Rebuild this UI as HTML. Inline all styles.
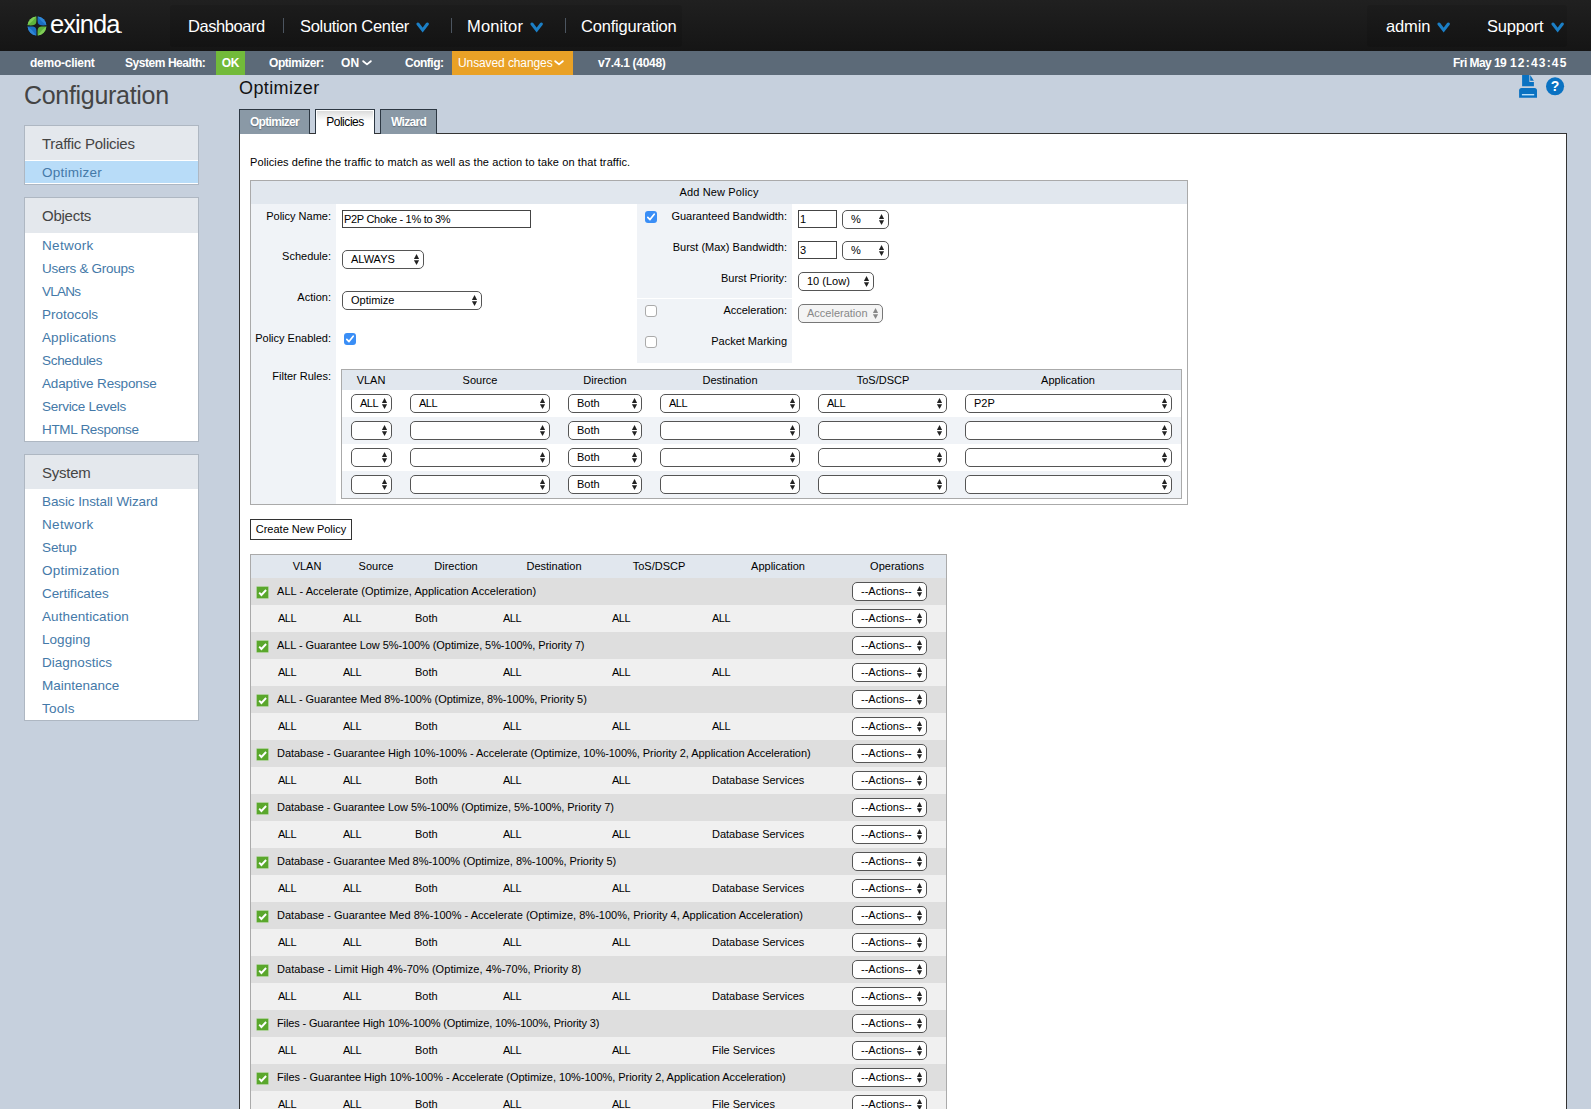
<!DOCTYPE html>
<html>
<head>
<meta charset="utf-8">
<title>Exinda - Optimizer Policies</title>
<style>
*{box-sizing:border-box;margin:0;padding:0}
html,body{width:1591px;height:1109px;overflow:hidden}
body{font-family:"Liberation Sans",sans-serif;background:#c6d0dd;position:relative;font-size:11px;color:#000}
.abs{position:absolute}
/* navbar */
#nav{position:absolute;left:0;top:0;width:1591px;height:51px;background:linear-gradient(#202020,#151515)}
#nav .box{position:absolute;top:5px;height:42px;background:linear-gradient(#1c1c1c,#131313);border-radius:3px}
#nav .it{position:absolute;top:16px;color:#fff;font-size:16.5px;line-height:20px;white-space:nowrap}
#nav .sep{position:absolute;top:18px;width:1px;height:15px;background:#4c5560}
.chev{position:absolute}
/* status */
#status{position:absolute;left:0;top:51px;width:1591px;height:24px;background:#5c6a78;color:#fff;font-size:12px;font-weight:bold}
#status span{position:absolute;top:0;line-height:25px;white-space:nowrap}
/* sidebar */
#cfg{position:absolute;left:24px;top:80px;font-size:25px;line-height:30px;color:#444;letter-spacing:-0.3px}
.sb{position:absolute;left:24px;width:175px;background:#fff;border:1px solid #aeb7c2}
.sb h3{font-weight:normal;font-size:15px;color:#444;height:34px;line-height:35px;padding-left:17px;background:#e4e8ed;letter-spacing:-0.25px}
.sb a{display:block;height:23px;line-height:24px;padding-left:17px;color:#4479a8;font-size:13.5px;white-space:nowrap}
.sb a{position:relative;top:1px}
.sb a.sel{top:0;background:#b8dcf8;height:22px;line-height:24px;border-top:1px solid #fff;box-sizing:content-box}
/* main */
#ttl{position:absolute;left:239px;top:75px;font-size:18px;line-height:26px;color:#111;letter-spacing:0.4px}
.tab{position:absolute;z-index:2;top:109px;height:25px;border:1px solid #2d3843;border-bottom:none;background:#8a99a6;color:#fff;font-size:12px;font-weight:bold;text-align:center;line-height:25px;letter-spacing:-0.7px;text-shadow:0 1px 1px rgba(60,70,80,.5)}
.tab.act{background:linear-gradient(#d8d8d8,#fff 45%);box-shadow:inset 1px 1px 0 #fff,inset -1px 0 0 #fff;color:#000;font-weight:normal;height:25px;letter-spacing:-0.45px;text-shadow:none}
#panel{position:absolute;left:239px;top:133px;width:1328px;height:990px;background:#fff;border:1px solid #333}
.lbl{position:absolute;text-align:right;white-space:nowrap;font-size:11px;line-height:14px}
.inp{position:absolute;border:1px solid #444;background:#fff;height:18px;font-size:11px;line-height:16px;padding-left:1px;white-space:nowrap;overflow:hidden}
.s{position:absolute;height:19px;border:1px solid #555;border-radius:5px;background:#fff;font-size:11px;line-height:17px;padding-left:8px;white-space:nowrap;overflow:hidden}
.s:before,.s:after{content:"";position:absolute;right:3.9px;width:5.2px;background:#222}
.s:before{top:3.1px;height:4.9px;clip-path:polygon(50% 0,100% 100%,0 100%)}
.s:after{top:9.3px;height:4.7px;clip-path:polygon(0 0,100% 0,50% 100%)}
.s.dis{color:#888;border-color:#777;background:#f4f4f4}
.s.dis:before,.s.dis:after{background:#888}
.cb{position:absolute;width:12px;height:12px;border-radius:3px}
.cb.on{background:#3a8ef6}
.cb.off{background:#fff;border:1px solid #aaa}
.th{position:absolute;text-align:center;white-space:nowrap;font-size:11px;line-height:14px}
.t{position:absolute;white-space:nowrap;font-size:11px;line-height:14px}
.gc{position:absolute;width:11px;height:11px;background:#5aa72c;box-shadow:0 0 0 0.5px #7cc255}
</style>
</head>
<body>
<div id="nav">
<div class="box" style="left:170px;width:512px"></div>
<div class="box" style="left:1367px;width:200px"></div>
<svg class="abs" style="left:27.4px;top:16.4px" width="20.2" height="20.2" viewBox="0 0 21 21">
<g><path d="M9.75 0.62 A9.8 9.8 0 0 0 0.62 9.75 C9.5 10.1 10.1 9.5 9.75 0.62 Z" fill="#5cb23c"/><path d="M9.75 0.62 A9.8 9.8 0 0 0 0.62 9.75 Q6 6 9.75 0.62 Z" fill="#7fcc57"/></g>
<g transform="rotate(90 10.4 10.4)"><path d="M9.75 0.62 A9.8 9.8 0 0 0 0.62 9.75 C9.5 10.1 10.1 9.5 9.75 0.62 Z" fill="#1a6ec2"/><path d="M9.75 0.62 A9.8 9.8 0 0 0 0.62 9.75 Q6 6 9.75 0.62 Z" fill="#2f86d6"/></g>
<g transform="rotate(180 10.4 10.4)"><path d="M9.75 0.62 A9.8 9.8 0 0 0 0.62 9.75 C9.5 10.1 10.1 9.5 9.75 0.62 Z" fill="#5cb23c"/><path d="M9.75 0.62 A9.8 9.8 0 0 0 0.62 9.75 Q6 6 9.75 0.62 Z" fill="#7fcc57"/></g>
<g transform="rotate(270 10.4 10.4)"><path d="M9.75 0.62 A9.8 9.8 0 0 0 0.62 9.75 C9.5 10.1 10.1 9.5 9.75 0.62 Z" fill="#1a6ec2"/><path d="M9.75 0.62 A9.8 9.8 0 0 0 0.62 9.75 Q6 6 9.75 0.62 Z" fill="#2f86d6"/></g>
</svg>
<div class="abs" id="logo" style="left:50px;top:8px;color:#fff;font-size:25.5px;line-height:32px;letter-spacing:-0.95px">exinda<span style="font-size:12px">.</span></div>
<div class="it" style="left:188px;letter-spacing:-0.45px">Dashboard</div>
<div class="sep" style="left:283px"></div>
<div class="it" style="left:300px;letter-spacing:-0.32px">Solution Center</div><svg class="chev" style="left:415px;top:22px" width="14" height="11" viewBox="0 0 14 11"><path d="M3 2 L7.65 8.1 L12.3 2" fill="none" stroke="#1b7fc6" stroke-width="3" stroke-linecap="round" stroke-linejoin="miter"/></svg>
<div class="sep" style="left:451px"></div>
<div class="it" style="left:467px;letter-spacing:0.15px">Monitor</div><svg class="chev" style="left:529px;top:22px" width="14" height="11" viewBox="0 0 14 11"><path d="M3 2 L7.65 8.1 L12.3 2" fill="none" stroke="#1b7fc6" stroke-width="3" stroke-linecap="round" stroke-linejoin="miter"/></svg>
<div class="sep" style="left:565px"></div>
<div class="it" style="left:581px;letter-spacing:-0.2px">Configuration</div>
<div class="it" style="left:1386px;letter-spacing:-0.15px">admin</div><svg class="chev" style="left:1436px;top:22px" width="14" height="11" viewBox="0 0 14 11"><path d="M3 2 L7.65 8.1 L12.3 2" fill="none" stroke="#1b7fc6" stroke-width="3" stroke-linecap="round" stroke-linejoin="miter"/></svg>
<div class="it" style="left:1487px;letter-spacing:-0.2px">Support</div><svg class="chev" style="left:1550px;top:22px" width="14" height="11" viewBox="0 0 14 11"><path d="M3 2 L7.65 8.1 L12.3 2" fill="none" stroke="#1b7fc6" stroke-width="3" stroke-linecap="round" stroke-linejoin="miter"/></svg>
</div>
<div id="status">
<span style="left:30px;letter-spacing:-0.25px">demo-client</span>
<span style="left:125px;letter-spacing:-0.45px">System Health:</span>
<span style="left:216px;width:29px;height:24px;background:#72ba3a;text-align:center;letter-spacing:-0.3px">OK</span>
<span style="left:269px;letter-spacing:-0.45px">Optimizer:</span>
<span style="left:341px;letter-spacing:0.2px">ON</span><svg class="chev" style="left:362px;top:9px" width="10" height="6" viewBox="0 0 10 6"><path d="M1.2 1.2 L5.0 4.4 L8.8 1.2" fill="none" stroke="#fff" stroke-width="1.8" stroke-linecap="round" stroke-linejoin="round"/></svg>
<span style="left:405px;letter-spacing:-0.5px">Config:</span>
<span style="left:452px;width:121px;height:24px;background:#e9a126;padding-left:6px;font-weight:normal;letter-spacing:-0.1px">Unsaved changes</span><svg class="chev" style="left:554px;top:9px" width="10" height="6" viewBox="0 0 10 6"><path d="M1.2 1.2 L5.0 4.4 L8.8 1.2" fill="none" stroke="#fff" stroke-width="1.8" stroke-linecap="round" stroke-linejoin="round"/></svg>
<span style="left:598px;letter-spacing:-0.3px">v7.4.1 (4048)</span>
<span style="left:1453px;letter-spacing:-0.55px">Fri May 19 <span style="position:static;letter-spacing:1.2px;margin-left:1px">12:43:45</span></span>
</div>
<div id="cfg">Configuration</div>
<div id="side">
<div class="sb" style="top:125px;height:60px"><h3>Traffic Policies</h3><a class="sel" style="letter-spacing:0.24px">Optimizer</a></div>
<div class="sb" style="top:197px;height:245px"><h3 style="height:35px">Objects</h3>
<a style="letter-spacing:0.31px">Network</a><a style="letter-spacing:-0.27px">Users &amp; Groups</a><a style="letter-spacing:-0.76px">VLANs</a><a style="letter-spacing:-0.02px">Protocols</a><a style="letter-spacing:0.11px">Applications</a><a style="letter-spacing:-0.31px">Schedules</a><a style="letter-spacing:-0.14px">Adaptive Response</a><a style="letter-spacing:-0.28px">Service Levels</a><a style="letter-spacing:-0.32px">HTML Response</a></div>
<div class="sb" style="top:454px;height:267px"><h3>System</h3>
<a style="letter-spacing:-0.1px">Basic Install Wizard</a><a style="letter-spacing:0.31px">Network</a><a style="letter-spacing:-0.12px">Setup</a><a style="letter-spacing:0.21px">Optimization</a><a style="letter-spacing:-0.08px">Certificates</a><a style="letter-spacing:0.09px">Authentication</a><a style="letter-spacing:0.04px">Logging</a><a style="letter-spacing:0.02px">Diagnostics</a><a style="letter-spacing:-0.0px">Maintenance</a><a style="letter-spacing:0.22px">Tools</a></div>
</div>
<div id="ttl">Optimizer</div>
<div id="tabs">
<div class="tab" style="left:239px;width:71px">Optimizer</div>
<div class="tab act" style="left:315px;width:60px;z-index:3">Policies</div>
<div class="tab" style="left:380px;width:57px">Wizard</div>
<svg class="abs" style="left:1519px;top:75px" width="18" height="24" viewBox="0 0 18 24">
<path d="M3.1 0 H10.4 V7 H14.9 V11.3 H3.1 Z" fill="#0a72c2"/><path d="M11.2 0 V5.8 H14.9 Z" fill="#0a72c2"/>
<path d="M0.1 22.7 V15.6 Q0.1 13.1 2.6 13.1 H15.5 Q18 13.1 18 15.6 V22.7 Z" fill="#0a72c2"/><rect x="2.9" y="19" width="12.3" height="1.4" fill="#b9e0fb"/>
</svg>
<svg class="abs" style="left:1545px;top:76px" width="20" height="20" viewBox="0 0 20 20"><circle cx="10.05" cy="10.3" r="9.05" fill="#0a72c2"/>
<text x="10.05" y="14.9" text-anchor="middle" font-family="Liberation Sans, sans-serif" font-weight="bold" font-size="14" fill="#fff">?</text></svg>
</div>
<div id="panel">
<div class="t" style="left:10px;top:21px;letter-spacing:0.1px">Policies define the traffic to match as well as the action to take on that traffic.</div>
<div class="abs" style="left:10px;top:46px;width:938px;height:325px;border:1px solid #aaa;background:#fff"></div>
<div class="abs" style="left:11px;top:47px;width:936px;height:23px;background:#e1e7ee"></div>
<div class="th" style="left:379px;top:51px;width:200px;letter-spacing:0.15px">Add New Policy</div>
<div class="abs" style="left:11px;top:70px;width:85px;height:300px;background:#f0f3f7"></div>
<div class="lbl" style="left:-59px;top:75px;width:150px">Policy Name:</div>
<div class="lbl" style="left:-59px;top:115px;width:150px">Schedule:</div>
<div class="lbl" style="left:-59px;top:156px;width:150px">Action:</div>
<div class="lbl" style="left:-59px;top:197px;width:150px">Policy Enabled:</div>
<div class="lbl" style="left:-59px;top:235px;width:150px">Filter Rules:</div>
<div class="inp" style="left:102px;top:76px;width:189px"><span style="letter-spacing:-0.3px">P2P Choke - 1% to 3%</span></div>
<div class="s " style="left:102px;top:116px;width:82px">ALWAYS</div>
<div class="s " style="left:102px;top:157px;width:140px">Optimize</div>
<div class="cb on" style="left:104px;top:199px"><svg width="12" height="12" viewBox="0 0 12 12" style="display:block"><path d="M2.8 6.3 L5 8.6 L9.2 3.2" fill="none" stroke="#fff" stroke-width="1.7" stroke-linecap="round" stroke-linejoin="round"/></svg></div>
<div class="abs" style="left:397px;top:70px;width:155px;height:94px;background:#f0f3f7"></div>
<div class="abs" style="left:397px;top:165px;width:155px;height:64px;background:#f0f3f7"></div>
<div class="cb on" style="left:405px;top:77px"><svg width="12" height="12" viewBox="0 0 12 12" style="display:block"><path d="M2.8 6.3 L5 8.6 L9.2 3.2" fill="none" stroke="#fff" stroke-width="1.7" stroke-linecap="round" stroke-linejoin="round"/></svg></div>
<div class="lbl" style="left:397px;top:75px;width:150px">Guaranteed Bandwidth:</div>
<div class="inp" style="left:558px;top:76px;width:39px">1</div>
<div class="s " style="left:602px;top:76px;width:47px">%</div>
<div class="lbl" style="left:397px;top:106px;width:150px">Burst (Max) Bandwidth:</div>
<div class="inp" style="left:558px;top:107px;width:39px">3</div>
<div class="s " style="left:602px;top:107px;width:47px">%</div>
<div class="lbl" style="left:397px;top:137px;width:150px">Burst Priority:</div>
<div class="s " style="left:558px;top:138px;width:76px">10 (Low)</div>
<div class="cb off" style="left:405px;top:171px"></div>
<div class="lbl" style="left:397px;top:169px;width:150px">Acceleration:</div>
<div class="s dis" style="left:558px;top:170px;width:85px">Acceleration</div>
<div class="cb off" style="left:405px;top:202px"></div>
<div class="lbl" style="left:397px;top:200px;width:150px">Packet Marking</div>
<div class="abs" style="left:101px;top:235px;width:841px;height:130px;border:1px solid #aaa;background:#fff"></div>
<div class="abs" style="left:102px;top:236px;width:839px;height:20px;background:#e1e7ee"></div>
<div class="th" style="left:71.0px;top:239px;width:120px">VLAN</div>
<div class="th" style="left:180.0px;top:239px;width:120px">Source</div>
<div class="th" style="left:305.0px;top:239px;width:120px">Direction</div>
<div class="th" style="left:430.0px;top:239px;width:120px">Destination</div>
<div class="th" style="left:583.0px;top:239px;width:120px">ToS/DSCP</div>
<div class="th" style="left:768.0px;top:239px;width:120px">Application</div>
<div class="s " style="left:111px;top:260px;width:41px;letter-spacing:-0.5px">ALL</div>
<div class="s " style="left:170px;top:260px;width:140px;letter-spacing:-0.5px">ALL</div>
<div class="s " style="left:328px;top:260px;width:74px">Both</div>
<div class="s " style="left:420px;top:260px;width:140px;letter-spacing:-0.5px">ALL</div>
<div class="s " style="left:578px;top:260px;width:129px;letter-spacing:-0.5px">ALL</div>
<div class="s " style="left:725px;top:260px;width:207px">P2P</div>
<div class="abs" style="left:102px;top:283px;width:839px;height:27px;background:#f0f3f7"></div>
<div class="s " style="left:111px;top:287px;width:41px"></div>
<div class="s " style="left:170px;top:287px;width:140px"></div>
<div class="s " style="left:328px;top:287px;width:74px">Both</div>
<div class="s " style="left:420px;top:287px;width:140px"></div>
<div class="s " style="left:578px;top:287px;width:129px"></div>
<div class="s " style="left:725px;top:287px;width:207px"></div>
<div class="s " style="left:111px;top:314px;width:41px"></div>
<div class="s " style="left:170px;top:314px;width:140px"></div>
<div class="s " style="left:328px;top:314px;width:74px">Both</div>
<div class="s " style="left:420px;top:314px;width:140px"></div>
<div class="s " style="left:578px;top:314px;width:129px"></div>
<div class="s " style="left:725px;top:314px;width:207px"></div>
<div class="abs" style="left:102px;top:337px;width:839px;height:27px;background:#f0f3f7"></div>
<div class="s " style="left:111px;top:341px;width:41px"></div>
<div class="s " style="left:170px;top:341px;width:140px"></div>
<div class="s " style="left:328px;top:341px;width:74px">Both</div>
<div class="s " style="left:420px;top:341px;width:140px"></div>
<div class="s " style="left:578px;top:341px;width:129px"></div>
<div class="s " style="left:725px;top:341px;width:207px"></div>
<div class="abs" style="left:10px;top:385px;width:102px;height:21px;border:1px solid #333;background:#fff;font-size:11px;line-height:19px;text-align:center;white-space:nowrap">Create New Policy</div>
<div class="abs" style="left:10px;top:420px;width:697px;height:600px;border:1px solid #aaa;background:#fff"></div>
<div class="abs" style="left:11px;top:421px;width:695px;height:23px;background:#e1e7ee"></div>
<div class="th" style="left:7.0px;top:425px;width:120px">VLAN</div>
<div class="th" style="left:76.0px;top:425px;width:120px">Source</div>
<div class="th" style="left:156.0px;top:425px;width:120px">Direction</div>
<div class="th" style="left:254.0px;top:425px;width:120px">Destination</div>
<div class="th" style="left:359.0px;top:425px;width:120px">ToS/DSCP</div>
<div class="th" style="left:478.0px;top:425px;width:120px">Application</div>
<div class="th" style="left:597.0px;top:425px;width:120px">Operations</div>
<div class="abs" style="left:11px;top:444px;width:695px;height:27px;background:#dedede"></div>
<div class="gc" style="left:17px;top:453px"><svg width="11" height="11" viewBox="0 0 11 11" style="display:block"><path d="M2.2 5.7 L4.4 8 L9.1 3" fill="none" stroke="#fff" stroke-width="1.9" stroke-linejoin="miter"/></svg></div>
<div class="t" style="left:37px;top:450px"><span class="pn" style="letter-spacing:0.052px">ALL - Accelerate (Optimize, Application Acceleration)</span></div>
<div class="s " style="left:612px;top:448px;width:75px">--Actions--</div>
<div class="abs" style="left:11px;top:471px;width:695px;height:27px;background:#f0f0f0"></div>
<div class="t" style="left:38px;top:477px;letter-spacing:-0.5px">ALL</div>
<div class="t" style="left:103px;top:477px;letter-spacing:-0.5px">ALL</div>
<div class="t" style="left:175px;top:477px">Both</div>
<div class="t" style="left:263px;top:477px;letter-spacing:-0.5px">ALL</div>
<div class="t" style="left:372px;top:477px;letter-spacing:-0.5px">ALL</div>
<div class="t" style="left:472px;top:477px;letter-spacing:-0.5px">ALL</div>
<div class="s " style="left:612px;top:475px;width:75px">--Actions--</div>
<div class="abs" style="left:11px;top:498px;width:695px;height:27px;background:#dedede"></div>
<div class="gc" style="left:17px;top:507px"><svg width="11" height="11" viewBox="0 0 11 11" style="display:block"><path d="M2.2 5.7 L4.4 8 L9.1 3" fill="none" stroke="#fff" stroke-width="1.9" stroke-linejoin="miter"/></svg></div>
<div class="t" style="left:37px;top:504px"><span class="pn" style="letter-spacing:-0.078px">ALL - Guarantee Low 5%-100% (Optimize, 5%-100%, Priority 7)</span></div>
<div class="s " style="left:612px;top:502px;width:75px">--Actions--</div>
<div class="abs" style="left:11px;top:525px;width:695px;height:27px;background:#f0f0f0"></div>
<div class="t" style="left:38px;top:531px;letter-spacing:-0.5px">ALL</div>
<div class="t" style="left:103px;top:531px;letter-spacing:-0.5px">ALL</div>
<div class="t" style="left:175px;top:531px">Both</div>
<div class="t" style="left:263px;top:531px;letter-spacing:-0.5px">ALL</div>
<div class="t" style="left:372px;top:531px;letter-spacing:-0.5px">ALL</div>
<div class="t" style="left:472px;top:531px;letter-spacing:-0.5px">ALL</div>
<div class="s " style="left:612px;top:529px;width:75px">--Actions--</div>
<div class="abs" style="left:11px;top:552px;width:695px;height:27px;background:#dedede"></div>
<div class="gc" style="left:17px;top:561px"><svg width="11" height="11" viewBox="0 0 11 11" style="display:block"><path d="M2.2 5.7 L4.4 8 L9.1 3" fill="none" stroke="#fff" stroke-width="1.9" stroke-linejoin="miter"/></svg></div>
<div class="t" style="left:37px;top:558px"><span class="pn" style="letter-spacing:-0.059px">ALL - Guarantee Med 8%-100% (Optimize, 8%-100%, Priority 5)</span></div>
<div class="s " style="left:612px;top:556px;width:75px">--Actions--</div>
<div class="abs" style="left:11px;top:579px;width:695px;height:27px;background:#f0f0f0"></div>
<div class="t" style="left:38px;top:585px;letter-spacing:-0.5px">ALL</div>
<div class="t" style="left:103px;top:585px;letter-spacing:-0.5px">ALL</div>
<div class="t" style="left:175px;top:585px">Both</div>
<div class="t" style="left:263px;top:585px;letter-spacing:-0.5px">ALL</div>
<div class="t" style="left:372px;top:585px;letter-spacing:-0.5px">ALL</div>
<div class="t" style="left:472px;top:585px;letter-spacing:-0.5px">ALL</div>
<div class="s " style="left:612px;top:583px;width:75px">--Actions--</div>
<div class="abs" style="left:11px;top:606px;width:695px;height:27px;background:#dedede"></div>
<div class="gc" style="left:17px;top:615px"><svg width="11" height="11" viewBox="0 0 11 11" style="display:block"><path d="M2.2 5.7 L4.4 8 L9.1 3" fill="none" stroke="#fff" stroke-width="1.9" stroke-linejoin="miter"/></svg></div>
<div class="t" style="left:37px;top:612px"><span class="pn" style="letter-spacing:-0.042px">Database - Guarantee High 10%-100% - Accelerate (Optimize, 10%-100%, Priority 2, Application Acceleration)</span></div>
<div class="s " style="left:612px;top:610px;width:75px">--Actions--</div>
<div class="abs" style="left:11px;top:633px;width:695px;height:27px;background:#f0f0f0"></div>
<div class="t" style="left:38px;top:639px;letter-spacing:-0.5px">ALL</div>
<div class="t" style="left:103px;top:639px;letter-spacing:-0.5px">ALL</div>
<div class="t" style="left:175px;top:639px">Both</div>
<div class="t" style="left:263px;top:639px;letter-spacing:-0.5px">ALL</div>
<div class="t" style="left:372px;top:639px;letter-spacing:-0.5px">ALL</div>
<div class="t" style="left:472px;top:639px">Database Services</div>
<div class="s " style="left:612px;top:637px;width:75px">--Actions--</div>
<div class="abs" style="left:11px;top:660px;width:695px;height:27px;background:#dedede"></div>
<div class="gc" style="left:17px;top:669px"><svg width="11" height="11" viewBox="0 0 11 11" style="display:block"><path d="M2.2 5.7 L4.4 8 L9.1 3" fill="none" stroke="#fff" stroke-width="1.9" stroke-linejoin="miter"/></svg></div>
<div class="t" style="left:37px;top:666px"><span class="pn" style="letter-spacing:-0.048px">Database - Guarantee Low 5%-100% (Optimize, 5%-100%, Priority 7)</span></div>
<div class="s " style="left:612px;top:664px;width:75px">--Actions--</div>
<div class="abs" style="left:11px;top:687px;width:695px;height:27px;background:#f0f0f0"></div>
<div class="t" style="left:38px;top:693px;letter-spacing:-0.5px">ALL</div>
<div class="t" style="left:103px;top:693px;letter-spacing:-0.5px">ALL</div>
<div class="t" style="left:175px;top:693px">Both</div>
<div class="t" style="left:263px;top:693px;letter-spacing:-0.5px">ALL</div>
<div class="t" style="left:372px;top:693px;letter-spacing:-0.5px">ALL</div>
<div class="t" style="left:472px;top:693px">Database Services</div>
<div class="s " style="left:612px;top:691px;width:75px">--Actions--</div>
<div class="abs" style="left:11px;top:714px;width:695px;height:27px;background:#dedede"></div>
<div class="gc" style="left:17px;top:723px"><svg width="11" height="11" viewBox="0 0 11 11" style="display:block"><path d="M2.2 5.7 L4.4 8 L9.1 3" fill="none" stroke="#fff" stroke-width="1.9" stroke-linejoin="miter"/></svg></div>
<div class="t" style="left:37px;top:720px"><span class="pn" style="letter-spacing:-0.031px">Database - Guarantee Med 8%-100% (Optimize, 8%-100%, Priority 5)</span></div>
<div class="s " style="left:612px;top:718px;width:75px">--Actions--</div>
<div class="abs" style="left:11px;top:741px;width:695px;height:27px;background:#f0f0f0"></div>
<div class="t" style="left:38px;top:747px;letter-spacing:-0.5px">ALL</div>
<div class="t" style="left:103px;top:747px;letter-spacing:-0.5px">ALL</div>
<div class="t" style="left:175px;top:747px">Both</div>
<div class="t" style="left:263px;top:747px;letter-spacing:-0.5px">ALL</div>
<div class="t" style="left:372px;top:747px;letter-spacing:-0.5px">ALL</div>
<div class="t" style="left:472px;top:747px">Database Services</div>
<div class="s " style="left:612px;top:745px;width:75px">--Actions--</div>
<div class="abs" style="left:11px;top:768px;width:695px;height:27px;background:#dedede"></div>
<div class="gc" style="left:17px;top:777px"><svg width="11" height="11" viewBox="0 0 11 11" style="display:block"><path d="M2.2 5.7 L4.4 8 L9.1 3" fill="none" stroke="#fff" stroke-width="1.9" stroke-linejoin="miter"/></svg></div>
<div class="t" style="left:37px;top:774px"><span class="pn" style="letter-spacing:0.014px">Database - Guarantee Med 8%-100% - Accelerate (Optimize, 8%-100%, Priority 4, Application Acceleration)</span></div>
<div class="s " style="left:612px;top:772px;width:75px">--Actions--</div>
<div class="abs" style="left:11px;top:795px;width:695px;height:27px;background:#f0f0f0"></div>
<div class="t" style="left:38px;top:801px;letter-spacing:-0.5px">ALL</div>
<div class="t" style="left:103px;top:801px;letter-spacing:-0.5px">ALL</div>
<div class="t" style="left:175px;top:801px">Both</div>
<div class="t" style="left:263px;top:801px;letter-spacing:-0.5px">ALL</div>
<div class="t" style="left:372px;top:801px;letter-spacing:-0.5px">ALL</div>
<div class="t" style="left:472px;top:801px">Database Services</div>
<div class="s " style="left:612px;top:799px;width:75px">--Actions--</div>
<div class="abs" style="left:11px;top:822px;width:695px;height:27px;background:#dedede"></div>
<div class="gc" style="left:17px;top:831px"><svg width="11" height="11" viewBox="0 0 11 11" style="display:block"><path d="M2.2 5.7 L4.4 8 L9.1 3" fill="none" stroke="#fff" stroke-width="1.9" stroke-linejoin="miter"/></svg></div>
<div class="t" style="left:37px;top:828px"><span class="pn" style="letter-spacing:0.05px">Database - Limit High 4%-70% (Optimize, 4%-70%, Priority 8)</span></div>
<div class="s " style="left:612px;top:826px;width:75px">--Actions--</div>
<div class="abs" style="left:11px;top:849px;width:695px;height:27px;background:#f0f0f0"></div>
<div class="t" style="left:38px;top:855px;letter-spacing:-0.5px">ALL</div>
<div class="t" style="left:103px;top:855px;letter-spacing:-0.5px">ALL</div>
<div class="t" style="left:175px;top:855px">Both</div>
<div class="t" style="left:263px;top:855px;letter-spacing:-0.5px">ALL</div>
<div class="t" style="left:372px;top:855px;letter-spacing:-0.5px">ALL</div>
<div class="t" style="left:472px;top:855px">Database Services</div>
<div class="s " style="left:612px;top:853px;width:75px">--Actions--</div>
<div class="abs" style="left:11px;top:876px;width:695px;height:27px;background:#dedede"></div>
<div class="gc" style="left:17px;top:885px"><svg width="11" height="11" viewBox="0 0 11 11" style="display:block"><path d="M2.2 5.7 L4.4 8 L9.1 3" fill="none" stroke="#fff" stroke-width="1.9" stroke-linejoin="miter"/></svg></div>
<div class="t" style="left:37px;top:882px"><span class="pn" style="letter-spacing:-0.133px">Files - Guarantee High 10%-100% (Optimize, 10%-100%, Priority 3)</span></div>
<div class="s " style="left:612px;top:880px;width:75px">--Actions--</div>
<div class="abs" style="left:11px;top:903px;width:695px;height:27px;background:#f0f0f0"></div>
<div class="t" style="left:38px;top:909px;letter-spacing:-0.5px">ALL</div>
<div class="t" style="left:103px;top:909px;letter-spacing:-0.5px">ALL</div>
<div class="t" style="left:175px;top:909px">Both</div>
<div class="t" style="left:263px;top:909px;letter-spacing:-0.5px">ALL</div>
<div class="t" style="left:372px;top:909px;letter-spacing:-0.5px">ALL</div>
<div class="t" style="left:472px;top:909px">File Services</div>
<div class="s " style="left:612px;top:907px;width:75px">--Actions--</div>
<div class="abs" style="left:11px;top:930px;width:695px;height:27px;background:#dedede"></div>
<div class="gc" style="left:17px;top:939px"><svg width="11" height="11" viewBox="0 0 11 11" style="display:block"><path d="M2.2 5.7 L4.4 8 L9.1 3" fill="none" stroke="#fff" stroke-width="1.9" stroke-linejoin="miter"/></svg></div>
<div class="t" style="left:37px;top:936px"><span class="pn" style="letter-spacing:-0.053px">Files - Guarantee High 10%-100% - Accelerate (Optimize, 10%-100%, Priority 2, Application Acceleration)</span></div>
<div class="s " style="left:612px;top:934px;width:75px">--Actions--</div>
<div class="abs" style="left:11px;top:957px;width:695px;height:27px;background:#f0f0f0"></div>
<div class="t" style="left:38px;top:963px;letter-spacing:-0.5px">ALL</div>
<div class="t" style="left:103px;top:963px;letter-spacing:-0.5px">ALL</div>
<div class="t" style="left:175px;top:963px">Both</div>
<div class="t" style="left:263px;top:963px;letter-spacing:-0.5px">ALL</div>
<div class="t" style="left:372px;top:963px;letter-spacing:-0.5px">ALL</div>
<div class="t" style="left:472px;top:963px">File Services</div>
<div class="s " style="left:612px;top:961px;width:75px">--Actions--</div>
</div>
</body>
</html>
